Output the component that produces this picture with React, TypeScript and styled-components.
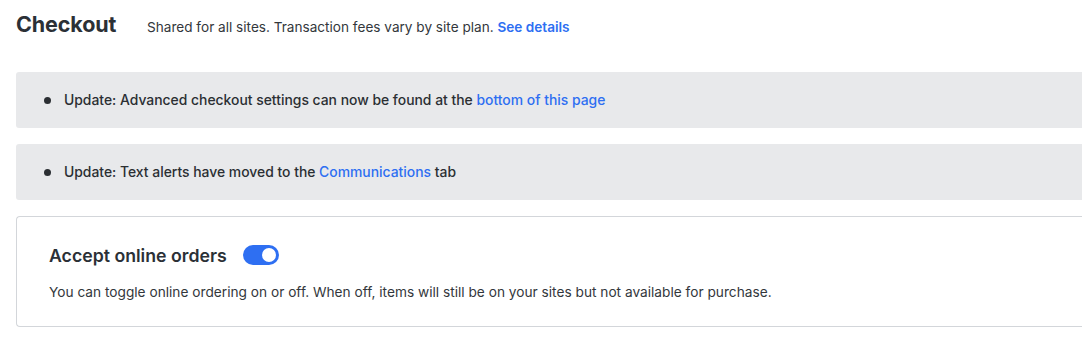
import React, {useState} from "react";
import styled, {createGlobalStyle} from "styled-components";

const GlobalStyle = createGlobalStyle`
  html, body {
    margin: 0;
    padding: 0;
    background: #ffffff;
    overflow: hidden;
  }
  body {
    font-family: Inter, "Noto Sans", "Liberation Sans", sans-serif;
    color: #2b2f33;
  }
`;

const Page = styled.div`
  width: 1120px;
  padding: 0 0 0 16px;
  box-sizing: border-box;
`;

const Header = styled.div`
  display: flex;
  align-items: baseline;
  height: 72px;
  padding-top: 11px;
  box-sizing: border-box;
`;

const Title = styled.h1`
  margin: 0;
  width: 131px;
  font-size: 21.5px;
  font-weight: 700;
  letter-spacing: -0.1px;
  color: #2b3036;
`;

const Subtitle = styled.p`
  margin: 0;
  font-size: 13.6px;
  color: #33373c;
`;

const Link = styled.a<{bold?: boolean}>`
  color: #2e6ff2;
  text-decoration: none;
  font-weight: ${p => p.bold ? 600 : 'inherit'};
  cursor: pointer;
`;

const Banner = styled.div`
  display: flex;
  align-items: center;
  height: 56px;
  margin-bottom: 16px;
  padding-left: 28px;
  background: #e8e9eb;
  border-radius: 3px 0 0 3px;
  font-size: 13.9px;
  font-weight: 500;
  color: #2b2f33;
`;

const Bullet = styled.span`
  width: 7px;
  height: 7px;
  border-radius: 50%;
  background: #2b2f33;
  margin-right: 13px;
  flex-shrink: 0;
`;

const Card = styled.section`
  height: 111px;
  box-sizing: border-box;
  padding: 26px 0 0 32px;
  border: 1px solid #d3d6da;
  border-right: none;
  border-radius: 4px 0 0 4px;
`;

const CardHead = styled.div`
  display: flex;
  align-items: center;
  gap: 16px;
  height: 24px;
`;

const CardTitle = styled.h2`
  margin: 0;
  font-size: 17.7px;
  font-weight: 600;
  color: #2b3036;
`;

const Toggle = styled.button<{on: boolean}>`
  position: relative;
  width: 36px;
  height: 20px;
  padding: 0;
  border: none;
  border-radius: 10px;
  background: ${p => p.on ? '#2e6ff2' : '#c6cad0'};
  cursor: pointer;

  &::after {
    content: "";
    position: absolute;
    top: 3px;
    left: ${p => p.on ? '19px' : '3px'};
    width: 14px;
    height: 14px;
    border-radius: 50%;
    background: #ffffff;
  }
`;

const CardText = styled.p`
  margin: 17px 0 0;
  font-size: 13.7px;
  color: #33373c;
`;

export default function App() {
    const [online, setOnline] = useState(true);

    return (
        <Page>
            <GlobalStyle/>
            <Header>
                <Title>Checkout</Title>
                <Subtitle>
                    Shared for all sites. Transaction fees vary by site plan. <Link bold>See details</Link>
                </Subtitle>
            </Header>
            <Banner>
                <Bullet/>
                <span>Update: Advanced checkout settings can now be found at the <Link>bottom of this page</Link></span>
            </Banner>
            <Banner>
                <Bullet/>
                <span>Update: Text alerts have moved to the <Link>Communications</Link> tab</span>
            </Banner>
            <Card>
                <CardHead>
                    <CardTitle>Accept online orders</CardTitle>
                    <Toggle on={online} onClick={() => setOnline(!online)} aria-label="Accept online orders"/>
                </CardHead>
                <CardText>
                    You can toggle online ordering on or off. When off, items will still be on your sites but not available for purchase.
                </CardText>
            </Card>
        </Page>
    );
}
